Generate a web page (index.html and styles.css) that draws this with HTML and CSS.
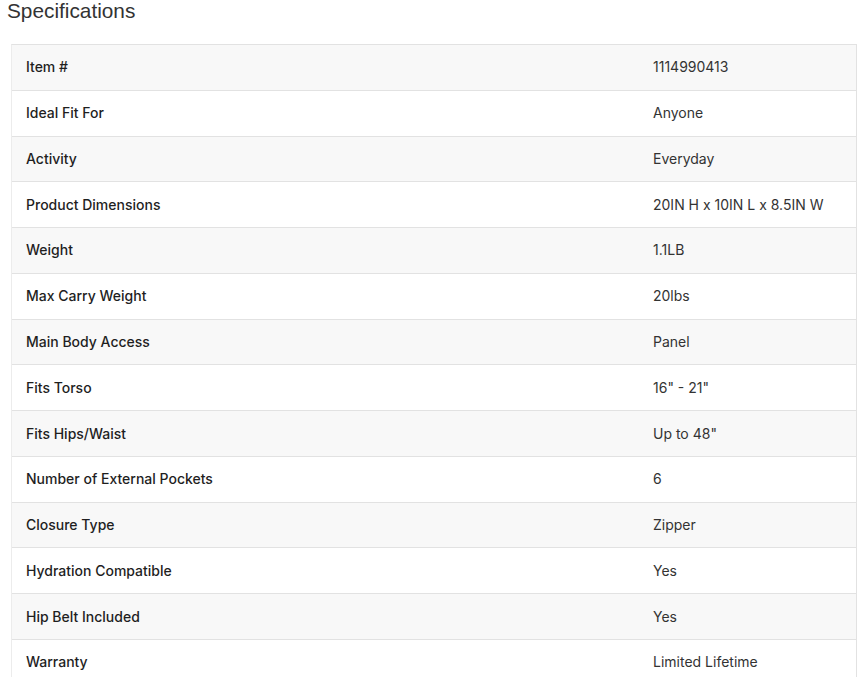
FILE: index.html
```html
<!DOCTYPE html>
<html>
<head>
<meta charset="utf-8">
<link rel="stylesheet" href="styles.css">
</head>
<body>
<h2 class="title">Specifications</h2>
<div class="specs">
  <div class="row"><div class="label">Item #</div><div class="value">1114990413</div></div>
  <div class="row"><div class="label">Ideal Fit For</div><div class="value">Anyone</div></div>
  <div class="row"><div class="label">Activity</div><div class="value">Everyday</div></div>
  <div class="row"><div class="label">Product Dimensions</div><div class="value">20IN H x 10IN L x 8.5IN W</div></div>
  <div class="row"><div class="label">Weight</div><div class="value">1.1LB</div></div>
  <div class="row"><div class="label">Max Carry Weight</div><div class="value">20lbs</div></div>
  <div class="row"><div class="label">Main Body Access</div><div class="value">Panel</div></div>
  <div class="row"><div class="label">Fits Torso</div><div class="value">16" - 21"</div></div>
  <div class="row"><div class="label">Fits Hips/Waist</div><div class="value">Up to 48"</div></div>
  <div class="row"><div class="label">Number of External Pockets</div><div class="value">6</div></div>
  <div class="row"><div class="label">Closure Type</div><div class="value">Zipper</div></div>
  <div class="row"><div class="label">Hydration Compatible</div><div class="value">Yes</div></div>
  <div class="row"><div class="label">Hip Belt Included</div><div class="value">Yes</div></div>
  <div class="row"><div class="label">Warranty</div><div class="value">Limited Lifetime</div></div>
</div>
</body>
</html>
```

FILE: styles.css
```css
html, body {
  margin: 0;
  padding: 0;
  background: #fff;
}
.title {
  margin: 0;
  padding: 0 0 0 7px;
  font-family: "Liberation Sans", Arial, sans-serif;
  font-weight: 400;
  font-size: 20.8px;
  line-height: 22px;
  color: #333;
}
.specs {
  margin: 22px 0 0 11px;
  width: 846px;
  border-top: 1px solid #e2e2e2;
  border-left: 1px solid #ececec;
  border-right: 1px solid #e2e2e2;
  font-family: Inter, "Noto Sans", sans-serif;
  font-size: 14px;
  box-sizing: border-box;
}
.row {
  display: grid;
  grid-template-columns: 626px 1fr;
  height: 45.77px;
  padding-bottom: 1px;
  box-sizing: border-box;
  border-bottom: 1px solid #e2e2e2;
  align-items: center;
}
.row:nth-child(odd) {
  background: #f8f8f8;
}
.label {
  padding-left: 14px;
  font-weight: 500;
  color: #1f1f1f;
}
.value {
  padding-left: 15px;
  font-weight: 400;
  color: #333;
}
```
